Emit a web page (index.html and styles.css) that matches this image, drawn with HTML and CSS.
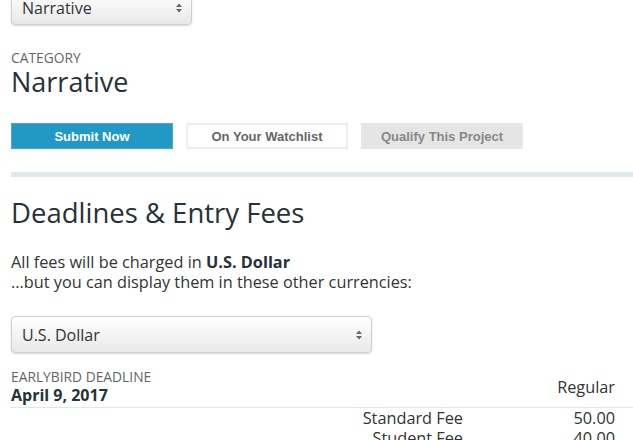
FILE: index.html
```html
<!DOCTYPE html>
<html>
<head>
<meta charset="utf-8">
<link rel="stylesheet" href="styles.css">
</head>
<body>
<div class="page">
  <div class="select select-top">
    <span class="select-text">Narrative</span>
    <span class="arrows"><svg width="8" height="12" viewBox="0 0 8 12"><path d="M4 1.5 L7 5 H1 Z" fill="#666"/><path d="M4 10.5 L7 7 H1 Z" fill="#666"/></svg></span>
  </div>

  <div class="label cat-label">CATEGORY</div>
  <div class="cat-value">Narrative</div>

  <div class="buttons">
    <div class="btn btn-primary">Submit Now</div>
    <div class="btn btn-outline">On Your Watchlist</div>
    <div class="btn btn-grey">Qualify This Project</div>
  </div>

  <div class="rule"></div>

  <h2 class="heading">Deadlines &amp; Entry Fees</h2>

  <p class="intro">All fees will be charged in <b>U.S. Dollar</b><br>...but you can display them in these other currencies:</p>

  <div class="select select-currency">
    <span class="select-text">U.S. Dollar</span>
    <span class="arrows"><svg width="8" height="12" viewBox="0 0 8 12"><path d="M4 1.5 L7 5 H1 Z" fill="#666"/><path d="M4 10.5 L7 7 H1 Z" fill="#666"/></svg></span>
  </div>

  <div class="deadline-head">
    <div class="deadline-info">
      <div class="label">EARLYBIRD DEADLINE</div>
      <div class="date">April 9, 2017</div>
    </div>
    <div class="col-head">Regular</div>
  </div>
  <div class="fee-row"><span class="fee-name">Standard Fee</span><span class="fee-val">50.00</span></div>
  <div class="fee-row"><span class="fee-name">Student Fee</span><span class="fee-val">40.00</span></div>
</div>
</body>
</html>
```

FILE: styles.css
```css
html, body { margin: 0; padding: 0; background: #fff; }
body { font-family: "Open Sans", sans-serif; color: #333; overflow: hidden; }
.page { padding-left: 11px; width: 630px; }

.select {
  box-sizing: border-box;
  display: flex;
  align-items: center;
  justify-content: space-between;
  border: 1px solid #d0d0d0;
  border-radius: 4px;
  background: linear-gradient(#ffffff, #e8e8e8);
  box-shadow: 0 1px 2px rgba(0,0,0,0.15);
  padding: 0 8px 0 10px;
  color: #333;
  font-size: 16px;
}
.select-top { width: 181px; height: 34px; margin-top: -9px; }
.select-currency { width: 361px; height: 37px; margin-top: 24px; }
.arrows { display: flex; }

.label { font-size: 13.8px; color: #666; line-height: 17px; }
.cat-label { margin-top: 25px; line-height: 16px; }
.cat-value { font-size: 27px; color: #263238; line-height: 30px; margin-top: 1px; }

.buttons { display: flex; gap: 13px; margin-top: 26px; }
.btn {
  box-sizing: border-box;
  width: 162px; height: 26px;
  display: flex; align-items: center; justify-content: center;
  font-family: "Liberation Sans", Arial, sans-serif;
  font-weight: bold; font-size: 13px;
}
.btn-primary { background: #2298c6; color: #fff; border: 1px solid #47abd3; }
.btn-outline { background: #fff; color: #666; border: 2px solid #eeeeee; }
.btn-grey { background: #e5e5e5; color: #888; border: 1px solid #e8e8e8; }

.rule { height: 5px; background: #e1e8ec; margin-top: 23px; width: 622px; }

.heading { font-weight: normal; font-size: 27.5px; color: #263238; margin: 18px 0 0; line-height: 36px; }
.intro { font-size: 16.3px; line-height: 20px; margin: 21px 0 0; color: #333; }
.intro b { font-weight: bold; color: #263238; }

.deadline-head {
  display: flex; justify-content: space-between; align-items: flex-end;
  width: 622px; box-sizing: border-box; padding-right: 18px;
  border-bottom: 1px solid #dfe6ea; margin-top: 15px; padding-bottom: 2px;
}
.date { font-weight: bold; font-size: 16px; color: #263238; line-height: 20px; }
.col-head { font-size: 16.3px; line-height: 20px; color: #333; padding-bottom: 8px; }

.fee-row { display: flex; justify-content: flex-end; width: 622px; box-sizing: border-box; padding-right: 18px; font-size: 16.3px; line-height: 20px; }
.fee-name { width: 200px; text-align: right; }
.fee-val { width: 152px; text-align: right; }
```
